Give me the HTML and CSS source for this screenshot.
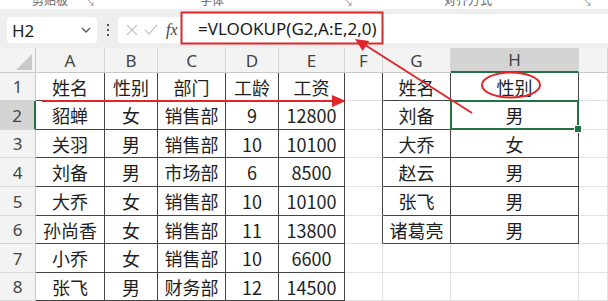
FILE: index.html
```html
<!DOCTYPE html>
<html lang="zh">
<head>
  <meta charset="UTF-8">
  <title>VLOOKUP</title>
  <link rel="stylesheet" href="styles.css">
</head>
<body>
  <div class="page">
    <div class="ribbon">
      <span class="grp g1">剪贴板</span><span class="launch l1">↘</span>
      <span class="grp g2">字体</span><span class="launch l2">↘</span>
      <span class="grp g3">对齐方式</span><span class="launch l3">↘</span>
    </div>

    <div class="formula-bar">
      <div class="name-box">
        <span>H2</span>
        <svg class="chev" width="10" height="6" viewBox="0 0 10 6"><path d="M1 1l4 4 4-4" fill="none" stroke="#555" stroke-width="1.3"/></svg>
      </div>
      <div class="dots"><i></i><i></i><i></i></div>
      <div class="fx-box">
        <svg width="12" height="12" viewBox="0 0 12 12"><path d="M1 1l10 10M11 1L1 11" stroke="#c4c4c4" stroke-width="1.2"/></svg>
        <svg width="14" height="12" viewBox="0 0 14 12"><path d="M1 6l4 4 8-9" fill="none" stroke="#c4c4c4" stroke-width="1.2"/></svg>
        <span class="fx">fx</span>
      </div>
      <div class="formula">=VLOOKUP(G2,A:E,2,0)</div>
    </div>

    <div class="sheet">
      <div class="corner"><svg width="16" height="16" viewBox="0 0 16 16"><path d="M16 0V16H0z" fill="#c9c9c9"/></svg></div>
      <div class="hd">A</div><div class="hd">B</div><div class="hd">C</div><div class="hd">D</div><div class="hd">E</div><div class="hd">F</div><div class="hd">G</div><div class="hd on">H</div><div class="hd"></div>

      <div class="rh">1</div>
      <div class="c b">姓名</div><div class="c b">性别</div><div class="c b">部门</div><div class="c b">工龄</div><div class="c b">工资</div><div class="c br"></div><div class="c b">姓名</div><div class="c b">性别</div><div class="c"></div>

      <div class="rh on">2</div>
      <div class="c b">貂蝉</div><div class="c b">女</div><div class="c b">销售部</div><div class="c b">9</div><div class="c b">12800</div><div class="c br"></div><div class="c b">刘备</div><div class="c b sel">男</div><div class="c"></div>

      <div class="rh">3</div>
      <div class="c b">关羽</div><div class="c b">男</div><div class="c b">销售部</div><div class="c b">10</div><div class="c b">10100</div><div class="c br"></div><div class="c b">大乔</div><div class="c b">女</div><div class="c"></div>

      <div class="rh">4</div>
      <div class="c b">刘备</div><div class="c b">男</div><div class="c b">市场部</div><div class="c b">6</div><div class="c b">8500</div><div class="c br"></div><div class="c b">赵云</div><div class="c b">男</div><div class="c"></div>

      <div class="rh">5</div>
      <div class="c b">大乔</div><div class="c b">女</div><div class="c b">销售部</div><div class="c b">10</div><div class="c b">10100</div><div class="c br"></div><div class="c b">张飞</div><div class="c b">男</div><div class="c"></div>

      <div class="rh">6</div>
      <div class="c b">孙尚香</div><div class="c b">女</div><div class="c b">销售部</div><div class="c b">11</div><div class="c b">13800</div><div class="c br"></div><div class="c b">诸葛亮</div><div class="c b">男</div><div class="c"></div>

      <div class="rh">7</div>
      <div class="c b">小乔</div><div class="c b">女</div><div class="c b">销售部</div><div class="c b">10</div><div class="c b">6600</div><div class="c"></div><div class="c"></div><div class="c"></div><div class="c"></div>

      <div class="rh">8</div>
      <div class="c b">张飞</div><div class="c b">男</div><div class="c b">财务部</div><div class="c b">12</div><div class="c b">14500</div><div class="c"></div><div class="c"></div><div class="c"></div><div class="c"></div>
    </div>

    <!-- red markup drawn over the screenshot -->
    <svg class="marks" width="608" height="301" viewBox="0 0 608 301">
      <g stroke="#e0262a" stroke-width="2" fill="none">
        <rect x="181.5" y="12.5" width="201" height="31"/>
        <line x1="42" y1="101" x2="335" y2="101"/>
        <line x1="472" y1="113" x2="362" y2="43"/>
        <ellipse cx="511" cy="85" rx="29" ry="12.5"/>
      </g>
      <g fill="#e0262a">
        <polygon points="332,95 346,101 332,107"/>
        <polygon points="355,39 362.7,51.1 369.2,41"/>
      </g>
    </svg>
  </div>
</body>
</html>
```

FILE: styles.css
```css
body {
  margin: 0;
  background: #fff;
  font-family: "Noto Sans CJK SC", sans-serif;
  color: #1e1e1e;
}

.page {
  position: relative;
  width: 608px;
  height: 301px;
  overflow: hidden;
}

/* bottom edge of the ribbon, labels cut off */
.ribbon {
  position: relative;
  height: 9px;
  overflow: hidden;
  background: #fff;
  font-size: 12px;
  line-height: 12px;
  color: #666;
}

.grp,
.launch {
  position: absolute;
  top: -6px;
}

.launch {
  font-size: 9px;
  color: #888;
  top: -3px;
}

.g1 { left: 32px; }
.g2 { left: 200px; }
.g3 { left: 444px; }
.l1 { left: 86px; }
.l2 { left: 344px; }
.l3 { left: 583px; }

.formula-bar {
  display: flex;
  height: 39px;
  box-sizing: border-box;
  padding: 5px 0 5px 7px;
  background: #eeeeee;
}

.name-box {
  display: flex;
  align-items: center;
  justify-content: space-between;
  width: 90px;
  height: 26px;
  margin-top: 3px;
  padding: 0 6px 0 5px;
  box-sizing: border-box;
  background: #fff;
  border-radius: 3px;
  font-family: "Noto Sans", sans-serif;
  font-size: 17px;
  color: #222;
}

.dots {
  display: flex;
  flex-direction: column;
  justify-content: center;
  gap: 3px;
  width: 21px;
  align-items: center;
  margin-top: 3px;
}

.dots i {
  display: block;
  width: 2px;
  height: 2px;
  background: #555;
}

.fx-box {
  display: flex;
  align-items: center;
  gap: 6px;
  width: 63px;
  height: 26px;
  margin-top: 3px;
  padding-left: 8px;
  box-sizing: border-box;
  background: #fff;
  border-radius: 3px 0 0 3px;
}

.fx {
  font-family: "Liberation Serif", serif;
  font-style: italic;
  font-size: 16px;
  color: #444;
  margin-left: 2px;
}

.formula {
  flex: 1;
  background: #fff;
  padding-left: 17px;
  font-family: "Noto Sans", sans-serif;
  font-size: 17px;
  line-height: 29px;
  color: #1a1a1a;
}

.sheet {
  display: grid;
  grid-template-columns: 36px 69px 53px 68px 53px 66px 38px 68px 128px 1fr;
  grid-template-rows: 25px 28px 29px 28px 29px 29px 28px 29px 28px;
}

.sheet > div {
  display: flex;
  align-items: center;
  justify-content: center;
  box-sizing: border-box;
  border-right: 1px solid #e2e2e2;
  border-bottom: 1px solid #e2e2e2;
}

.corner {
  background: #f3f3f3;
  justify-content: flex-end !important;
  align-items: flex-end !important;
  padding: 0 3px 2px 0;
  border-color: #c8c8c8 !important;
}

.sheet > .hd {
  background: #f3f3f3;
  border-right-color: #d6d6d6;
  border-bottom-color: #c8c8c8;
  font-family: "Noto Sans", sans-serif;
  font-size: 17px;
  color: #444;
}

.sheet > .rh {
  background: #f3f3f3;
  border-right-color: #c8c8c8;
  border-bottom-color: #d6d6d6;
  font-family: "Noto Sans", sans-serif;
  font-size: 17px;
  color: #444;
}

.sheet > .hd.on {
  background: #d4d4d4;
  border-bottom: 2px solid #217346;
}

.sheet > .rh.on {
  background: #d4d4d4;
  border-right: 2px solid #217346;
}

.c {
  font-size: 18px;
}

.sheet > .b {
  border-right-color: #454545;
  border-bottom-color: #454545;
}

.sheet > .br {
  border-right-color: #454545;
}

.sel {
  position: relative;
}

.sel::after {
  content: "";
  position: absolute;
  left: -1px;
  top: -1px;
  right: -1px;
  bottom: -1px;
  border: 2px solid #217346;
}

.sel::before {
  content: "";
  position: absolute;
  right: -4px;
  bottom: -4px;
  width: 6px;
  height: 6px;
  background: #217346;
  border: 1px solid #fff;
  z-index: 1;
}

.marks {
  position: absolute;
  left: 0;
  top: 0;
  pointer-events: none;
}
```
